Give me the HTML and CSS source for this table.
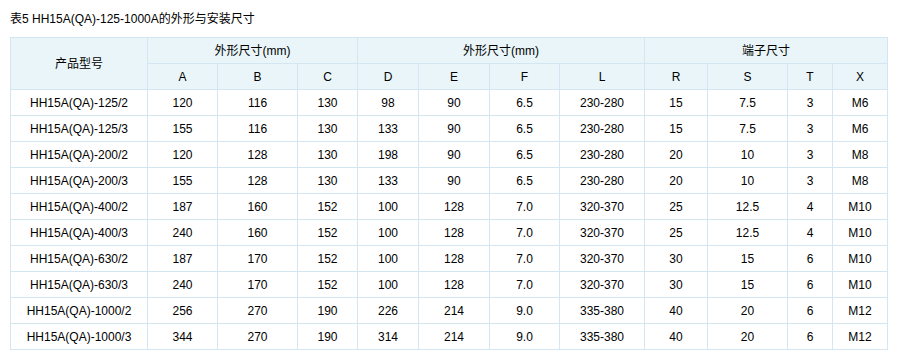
FILE: index.html
```html
<!DOCTYPE html>
<html lang="zh-CN">
<head>
<meta charset="utf-8">
<title>表5</title>
<link rel="stylesheet" href="styles.css">
</head>
<body>
<div class="page">
  <div class="title">表5 HH15A(QA)-125-1000A的外形与安装尺寸</div>
  <table class="spec">
    <colgroup>
      <col class="c-model">
      <col class="c-a"><col class="c-b"><col class="c-c">
      <col class="c-d"><col class="c-e"><col class="c-f"><col class="c-l">
      <col class="c-r"><col class="c-s"><col class="c-t"><col class="c-x">
    </colgroup>
    <thead>
      <tr>
        <th rowspan="2">产品型号</th>
        <th colspan="3">外形尺寸(mm)</th>
        <th colspan="4">外形尺寸(mm)</th>
        <th colspan="4">端子尺寸</th>
      </tr>
      <tr>
        <th>A</th><th>B</th><th>C</th><th>D</th><th>E</th><th>F</th><th>L</th><th>R</th><th>S</th><th>T</th><th>X</th>
      </tr>
    </thead>
    <tbody>
      <tr><td>HH15A(QA)-125/2</td><td>120</td><td>116</td><td>130</td><td>98</td><td>90</td><td>6.5</td><td>230-280</td><td>15</td><td>7.5</td><td>3</td><td>M6</td></tr>
      <tr><td>HH15A(QA)-125/3</td><td>155</td><td>116</td><td>130</td><td>133</td><td>90</td><td>6.5</td><td>230-280</td><td>15</td><td>7.5</td><td>3</td><td>M6</td></tr>
      <tr><td>HH15A(QA)-200/2</td><td>120</td><td>128</td><td>130</td><td>198</td><td>90</td><td>6.5</td><td>230-280</td><td>20</td><td>10</td><td>3</td><td>M8</td></tr>
      <tr><td>HH15A(QA)-200/3</td><td>155</td><td>128</td><td>130</td><td>133</td><td>90</td><td>6.5</td><td>230-280</td><td>20</td><td>10</td><td>3</td><td>M8</td></tr>
      <tr><td>HH15A(QA)-400/2</td><td>187</td><td>160</td><td>152</td><td>100</td><td>128</td><td>7.0</td><td>320-370</td><td>25</td><td>12.5</td><td>4</td><td>M10</td></tr>
      <tr><td>HH15A(QA)-400/3</td><td>240</td><td>160</td><td>152</td><td>100</td><td>128</td><td>7.0</td><td>320-370</td><td>25</td><td>12.5</td><td>4</td><td>M10</td></tr>
      <tr><td>HH15A(QA)-630/2</td><td>187</td><td>170</td><td>152</td><td>100</td><td>128</td><td>7.0</td><td>320-370</td><td>30</td><td>15</td><td>6</td><td>M10</td></tr>
      <tr><td>HH15A(QA)-630/3</td><td>240</td><td>170</td><td>152</td><td>100</td><td>128</td><td>7.0</td><td>320-370</td><td>30</td><td>15</td><td>6</td><td>M10</td></tr>
      <tr><td>HH15A(QA)-1000/2</td><td>256</td><td>270</td><td>190</td><td>226</td><td>214</td><td>9.0</td><td>335-380</td><td>40</td><td>20</td><td>6</td><td>M12</td></tr>
      <tr><td>HH15A(QA)-1000/3</td><td>344</td><td>270</td><td>190</td><td>314</td><td>214</td><td>9.0</td><td>335-380</td><td>40</td><td>20</td><td>6</td><td>M12</td></tr>
    </tbody>
  </table>
</div>
</body>
</html>
```

FILE: styles.css
```css
html, body {
  margin: 0;
  padding: 0;
  background: #ffffff;
}
body {
  font-family: "Liberation Sans", Arial, "Noto Sans CJK SC", sans-serif;
  font-size: 12px;
  color: #000000;
}
.page {
  padding: 9px 10px 0 10px;
}
.title {
  line-height: 20px;
  height: 20px;
  margin-bottom: 8px;
  white-space: nowrap;
}
.spec {
  border-collapse: collapse;
  table-layout: fixed;
  width: 878px;
}
.spec th,
.spec td {
  border: 1px solid #d3e6f1;
  height: 25px;
  padding: 0;
  text-align: center;
  vertical-align: middle;
  font-weight: normal;
  line-height: 14px;
  white-space: nowrap;
}
.spec th {
  background: #e9f5f8;
}
.spec td {
  background: #ffffff;
}
.c-model { width: 137px; }
.c-a { width: 70px; }
.c-b { width: 80px; }
.c-c { width: 60px; }
.c-d { width: 61px; }
.c-e { width: 71px; }
.c-f { width: 70px; }
.c-l { width: 85px; }
.c-r { width: 63px; }
.c-s { width: 80px; }
.c-t { width: 45px; }
.c-x { width: 55px; }
```
